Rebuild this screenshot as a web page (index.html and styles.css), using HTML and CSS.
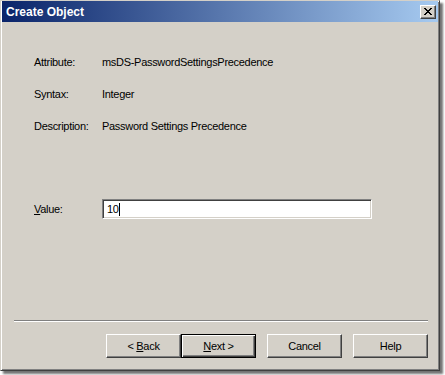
FILE: index.html
```html
<!DOCTYPE html>
<html lang="en">
    <head>
        <meta charset="UTF-8">
        <title>Create Object</title>
        <link rel="stylesheet" href="styles.css">
    </head>
    <body>
        <div class="window">
            <div class="titlebar">
                <span class="title">Create Object</span>
                <span class="close-btn">
                    <svg width="8" height="7" viewBox="0 0 8 7">
                        <path d="M0 0h2v1h1v1h2v-1h1v-1h2v1h-1v1h-1v1h-1v1h1v1h1v1h1v1h-2v-1h-1v-1h-2v1h-1v1h-2v-1h1v-1h1v-1h1v-1h-1v-1h-1v-1h-1z" fill="#000"/>
                    </svg>
                </span>
            </div>

            <div class="content">
                <div class="info">
                    <span class="label">Attribute:</span>
                    <span class="value">msDS-PasswordSettingsPrecedence</span>
                    <span class="label">Syntax:</span>
                    <span class="value">Integer</span>
                    <span class="label">Description:</span>
                    <span class="value">Password Settings Precedence</span>
                </div>

                <div class="field">
                    <span class="label"><u>V</u>alue:</span>
                    <div class="textbox">10<span class="caret"></span></div>
                </div>
            </div>

            <div class="separator"></div>

            <div class="buttons">
                <div class="pair">
                    <button class="btn">&lt; <u>B</u>ack</button>
                    <button class="btn default"><u>N</u>ext &gt;</button>
                </div>
                <button class="btn">Cancel</button>
                <button class="btn">Help</button>
            </div>
        </div>
    </body>
</html>
```

FILE: styles.css
```css
* {
    margin: 0; padding: 0; box-sizing: border-box;
}

html, body {
    width: 100%;
    height: 100%;
    background-color: #fff;
    font-family: "Liberation Sans", Arial, sans-serif;
    font-size: 11px;
    letter-spacing: -0.3px;
    color: #000;
    overflow: hidden;
}

.window {
    width: 440px;
    height: 371px;
    display: flex;
    flex-direction: column;
    background-color: #d4d0c8;
    border: 1px solid;
    border-color: #d4d0c8 #404040 #404040 #d4d0c8;
    box-shadow: inset 1px 1px #fff, inset -1px -1px #808080, 3px 3px 2px rgba(0, 0, 0, 0.55);
    padding: 0 2px 2px 2px;
}

.titlebar {
    height: 21px;
    margin: 0 -1px 0 -1px;
    display: flex;
    align-items: center;
    justify-content: space-between;
    padding: 0 2px 0 4px;
    background: linear-gradient(90deg, #0a246a, #a6caf0);
}

.title {
    color: #fff;
    font-weight: bold;
    font-size: 12px;
    letter-spacing: 0;
}

.close-btn {
    width: 16px;
    height: 14px;
    display: flex;
    align-items: center;
    justify-content: center;
    background-color: #d4d0c8;
    border: 1px solid;
    border-color: #fff #404040 #404040 #fff;
    box-shadow: inset -1px -1px #808080;
}

.content {
    flex: 1;
    padding: 24px 0 0 31px;
}

.info {
    display: grid;
    grid-template-columns: 68px auto;
    grid-auto-rows: 32px;
    align-items: center;
}

.field {
    display: flex;
    align-items: center;
    margin-top: 57px;
}

.field .label {
    width: 68px;
}

.textbox {
    width: 270px;
    height: 20px;
    background-color: #fff;
    border: 1px solid;
    border-color: #808080 #fff #fff #808080;
    box-shadow: inset 1px 1px #404040, inset -1px -1px #d4d0c8;
    padding: 3px 0 0 4px;
    line-height: 13px;
    display: flex;
    align-items: flex-start;
}

.caret {
    width: 1px;
    height: 13px;
    background-color: #000;
}

.separator {
    margin: 0 9px 0 11px;
    height: 2px;
    border-top: 1px solid #808080;
    border-bottom: 1px solid #fff;
}

.buttons {
    display: flex;
    justify-content: flex-end;
    gap: 11px;
    padding: 12px 9px 10px 0;
}

.pair {
    display: flex;
}

.btn {
    width: 75px;
    height: 24px;
    font-family: "Liberation Sans", Arial, sans-serif;
    font-size: 11px;
    letter-spacing: -0.3px;
    color: #000;
    background-color: #d4d0c8;
    border: 1px solid;
    border-color: #fff #404040 #404040 #fff;
    box-shadow: inset -1px -1px #808080;
}

.btn.default {
    border: 1px solid #000;
    box-shadow: inset 1px 1px #fff, inset -1px -1px #404040, inset -2px -2px #808080;
}
```
